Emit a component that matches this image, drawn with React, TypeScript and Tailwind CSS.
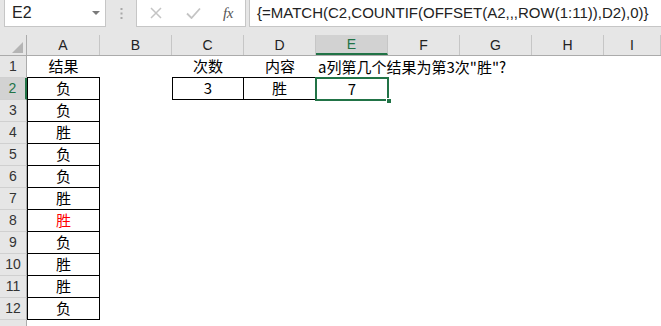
import React from 'react';

const cols = ['A', 'B', 'C', 'D', 'E', 'F', 'G', 'H', 'I'];
const colW = ['w-[73px]', 'w-[72px]', 'w-[72px]', 'w-[72px]', 'w-[72px]', 'w-[72px]', 'w-[72px]', 'w-[72px]', 'flex-1'];

const results = ['结果', '负', '负', '胜', '负', '负', '胜', '胜', '负', '胜', '胜', '负'];

const cjk = "font-['Noto_Sans_CJK_SC',sans-serif]";

function cellClass(row: number, col: number) {
  // row is 1-based, col index 0 = A
  let c = 'h-full shrink-0 box-border flex items-center ' + colW[col];
  if (col === 0) {
    if (row === 1) c += ' border-b border-black';
    else if (row <= 12) c += ' border-x border-b border-black';
  }
  if (col === 2) {
    if (row === 1) c += ' border-b border-black';
    if (row === 2) c += ' border-x border-b border-black';
  }
  if (col === 3) {
    if (row === 1) c += ' border-b border-black';
    if (row === 2) c += ' border-r border-b border-black';
  }
  return c;
}

function cellText(row: number, col: number) {
  if (col === 0 && row <= 12) {
    return (
      <span className={`w-full text-center text-[15px] ${row === 8 ? 'text-[#ff0000]' : 'text-black'}`}>{results[row - 1]}</span>
    );
  }
  if (row === 1 && col === 2) return <span className="w-full text-center text-[15px]">次数</span>;
  if (row === 1 && col === 3) return <span className="w-full text-center text-[15px]">内容</span>;
  if (row === 1 && col === 4)
    return (
      <span className="relative z-10 whitespace-nowrap pl-[2px] text-[15px]">a列第几个结果为第3次"胜"?</span>
    );
  if (row === 2 && col === 2) return <span className="w-full text-center text-[15px]">3</span>;
  if (row === 2 && col === 3) return <span className="w-full text-center text-[15px]">胜</span>;
  if (row === 2 && col === 4) return <span className="w-full text-center text-[15px]">7</span>;
  return null;
}

export default function App() {
  const rows = Array.from({ length: 13 }, (_, i) => i + 1);
  return (
    <div className="w-[661px] h-[326px] overflow-hidden bg-[#e6e6e6] font-['Liberation_Sans',sans-serif] text-black">
      {/* formula bar */}
      <div className="flex h-[35px] items-start">
        <div className="ml-[4px] flex h-[27px] w-[102px] items-center justify-between border-x border-b border-[#c6c6c6] bg-white pl-[7px] pr-[5px]">
          <span className="text-[16px] text-[#222]">E2</span>
          <svg width="8" height="4" viewBox="0 0 8 4" className="mb-[1px]">
            <polygon points="0,0 8,0 4,4" fill="#7a7a7a" />
          </svg>
        </div>
        <div className="flex h-[27px] w-[30px] items-center justify-center">
          <svg width="3" height="11" viewBox="0 0 3 11">
            <rect x="0.5" y="0" width="2" height="2" fill="#a8a8a8" />
            <rect x="0.5" y="4.5" width="2" height="2" fill="#a8a8a8" />
            <rect x="0.5" y="9" width="2" height="2" fill="#a8a8a8" />
          </svg>
        </div>
        <div className="flex h-[27px] w-[110px] items-center border-x border-b border-[#c6c6c6] bg-white">
          <svg width="12" height="12" viewBox="0 0 12 12" className="ml-[13px]">
            <path d="M1 1 L11 11 M11 1 L1 11" stroke="#c4c4c4" strokeWidth="1.5" />
          </svg>
          <svg width="15" height="12" viewBox="0 0 15 12" className="ml-[24px]">
            <path d="M1 6.5 L5.5 11 L14 1.5" stroke="#c4c4c4" strokeWidth="1.8" fill="none" />
          </svg>
          <span className="ml-[22px] font-['Liberation_Serif',serif] text-[15px] italic text-[#555] tracking-[-0.5px]">fx</span>
        </div>
        <div className="ml-[3px] flex h-[27px] flex-1 items-center border-l border-b border-[#c6c6c6] bg-white pl-[7px]">
          <span className="whitespace-nowrap text-[15px] text-[#222]">{'{=MATCH(C2,COUNTIF(OFFSET(A2,,,ROW(1:11)),D2),0)}'}</span>
        </div>
      </div>

      {/* column headers */}
      <div className="flex h-[20px] border-b border-[#ababab] box-content">
        <div className="relative w-[27px] shrink-0 border-r border-[#ababab]">
          <svg width="11" height="11" viewBox="0 0 11 11" className="absolute right-[3px] bottom-[2px]">
            <polygon points="11,0 11,11 0,11" fill="#b4b4b4" />
          </svg>
        </div>
        {cols.map((c, i) => (
          <div
            key={c}
            className={`${colW[i]} shrink-0 box-border flex items-center justify-center text-[14px] ${
              c === 'E'
                ? 'bg-[#d2d2d2] text-[#217346] border-b-2 border-[#217346] border-r border-r-[#c6c6c6]'
                : 'text-[#222] border-r border-[#c6c6c6]'
            }`}
          >
            {c}
          </div>
        ))}
      </div>

      {/* grid */}
      <div className={`bg-white ${cjk}`}>
        {rows.map((r) => (
          <div key={r} className="flex h-[22px]">
            <div
              className={`w-[27px] shrink-0 box-border flex items-center justify-center border-b border-[#d0d0d0] font-['Liberation_Sans',sans-serif] text-[14px] ${
                r === 2
                  ? 'bg-[#d2d2d2] text-[#217346] border-r-2 border-r-[#217346]'
                  : 'bg-[#e6e6e6] text-[#333] border-r border-r-[#ababab]'
              }`}
            >
              {r <= 12 ? r : ''}
            </div>
            {cols.map((c, i) => (
              <div key={c} className={`relative ${cellClass(r, i)}`}>
                {cellText(r, i)}
                {r === 2 && i === 4 && (
                  <>
                    <div className="pointer-events-none absolute -left-[1px] -top-[1px] h-[24px] w-[74px] border-2 border-[#217346]" />
                    <div className="absolute -right-[4px] -bottom-[4px] h-[6px] w-[6px] border border-white bg-[#217346] z-20" />
                  </>
                )}
              </div>
            ))}
          </div>
        ))}
      </div>
    </div>
  );
}
